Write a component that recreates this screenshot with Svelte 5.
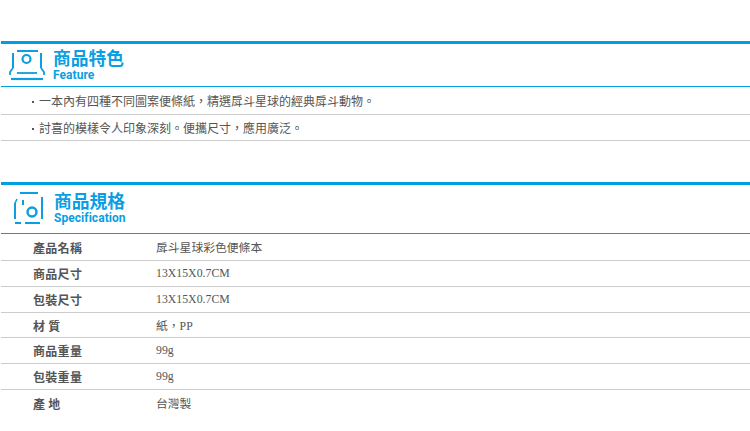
<script>
  const features = ['一本內有四種不同圖案便條紙，精選戽斗星球的經典戽斗動物。', '討喜的模樣令人印象深刻。便攜尺寸，應用廣泛。'];
  const specs = [
    ['產品名稱', '戽斗星球彩色便條本'],
    ['商品尺寸', '13X15X0.7CM'],
    ['包裝尺寸', '13X15X0.7CM'],
    ['材 質', '紙，PP'],
    ['商品重量', '99g'],
    ['包裝重量', '99g'],
    ['產 地', '台灣製']
  ];
</script>

<div class="page">
  <section class="feature">
    <header class="head h1">
      <svg class="icon" width="38" height="32" viewBox="0 0 38 32" fill="none" stroke="#0a9ee2" stroke-width="2">
        <path d="M9 2H30" />
        <path d="M5 4V19M33 4V19" />
        <circle cx="18.5" cy="10" r="4" stroke-width="2.2" />
        <path d="M5 19L2 23V26M33 19L36 23V26" stroke-width="1.8" />
        <path d="M9 24H29" stroke-width="1.8" />
        <path d="M3 30H35" stroke-width="2.2" />
      </svg>
      <div class="titles">
        <div class="zh">商品特色</div>
        <div class="en">Feature</div>
      </div>
    </header>
    <ul>
      {#each features as f}
        <li><span class="dot"></span>{f}</li>
      {/each}
    </ul>
  </section>

  <section class="spec">
    <header class="head h2">
      <svg class="icon" width="32" height="34" viewBox="0 0 32 34" fill="none" stroke="#0a9ee2" stroke-width="2">
        <path d="M7 2H25" />
        <path d="M2 12V28M10 9V14M29 6V28" />
        <path d="M2 12L4 8" stroke-width="1.5" />
        <circle cx="19" cy="21" r="4.5" stroke-width="2.4" />
        <path d="M2 32H8M12 32H27" />
      </svg>
      <div class="titles">
        <div class="zh">商品規格</div>
        <div class="en">Specification</div>
      </div>
    </header>
    <dl>
      {#each specs as [k, v]}
        <div class="row"><dt>{k}</dt><dd>{v}</dd></div>
      {/each}
    </dl>
  </section>
</div>

<style>
  :global(body) { margin: 0; background: #fff; }
  .page {
    width: 750px;
    height: 431px;
    overflow: hidden;
    padding: 41px 0 0 1px;
    box-sizing: border-box;
    font-family: "Liberation Serif", "Noto Sans CJK TC", serif;
    color: #555;
  }
  section { width: 749px; }
  .head {
    display: flex;
    align-items: flex-start;
    border-top: 3px solid #009fe3;
    border-bottom: 1px solid #009fe3;
    box-sizing: border-box;
  }
  .h1 { height: 46px; padding: 5px 0 0 7px; gap: 7px; }
  .h2 { height: 52px; padding: 6px 0 0 12px; gap: 9px; }
  .icon { flex: none; }
  .titles { color: #0a9ee2; font-family: "Noto Sans CJK TC", sans-serif; font-weight: 700; margin-top: -1px; }
  .h1 .titles { margin-top: -2px; }
  .zh { font-size: 17.8px; line-height: 20px; }
  .en { font-family: Roboto, sans-serif; font-size: 12px; line-height: 14px; margin-top: 1px; letter-spacing: 0.05px; }
  ul { list-style: none; margin: 0; padding: 0; }
  li {
    display: flex;
    align-items: center;
    height: 28px;
    border-bottom: 1px solid #ccc;
    box-sizing: border-box;
    padding-left: 31px;
    font-size: 12px;
    font-family: "Noto Sans CJK TC", sans-serif;
    white-space: nowrap;
  }
  li:nth-child(2) { height: 26px; }
  .dot { flex: none; width: 2px; height: 2px; background: #555; margin: 3px 5px 0 0; }
  .spec { margin-top: 41px; }
  dl { margin: 0; }
  .row {
    display: grid;
    grid-template-columns: 155px 1fr;
    height: 26px;
    align-items: center;
    border-bottom: 1px solid #ccc;
    box-sizing: border-box;
  }
  .row:nth-child(1) { height: 27px; }
  .row:nth-child(4) { height: 25px; }
  .row:last-child { border-bottom: 0; }
  dt {
    padding-left: 32px;
    font-family: "Noto Sans CJK TC", sans-serif;
    font-size: 12px;
    font-weight: 700;
    letter-spacing: 0.3px;
    color: #555;
  }
  dd { margin: 0; font-size: 11.8px; color: #555; }
</style>
